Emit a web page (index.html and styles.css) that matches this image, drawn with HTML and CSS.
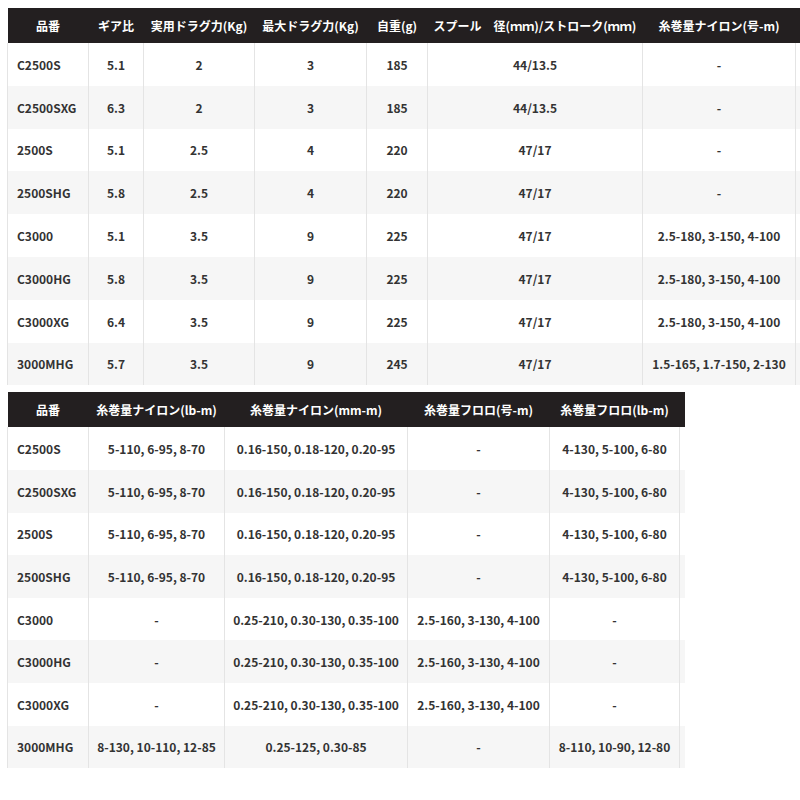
FILE: index.html
```html
<!DOCTYPE html>
<html lang="ja">
<head>
<meta charset="utf-8">
<link rel="stylesheet" href="styles.css">
</head>
<body>
<div class="wrap">
<table class="spec spec-a">
<colgroup>
<col style="width:81px"><col style="width:55px"><col style="width:111px"><col style="width:112px"><col style="width:61px"><col style="width:215px"><col style="width:153px"><col style="width:40px">
</colgroup>
<thead>
<tr><th>品番</th><th>ギア比</th><th>実用ドラグ力(Kg)</th><th>最大ドラグ力(Kg)</th><th>自重(g)</th><th>スプール　径(ｍｍ)/ストローク(ｍｍ)</th><th>糸巻量ナイロン(号-m)</th><th class="pad"></th></tr>
</thead>
<tbody>
<tr><td>C2500S</td><td>5.1</td><td>2</td><td>3</td><td>185</td><td>44/13.5</td><td>-</td><td class="pad"></td></tr>
<tr><td>C2500SXG</td><td>6.3</td><td>2</td><td>3</td><td>185</td><td>44/13.5</td><td>-</td><td class="pad"></td></tr>
<tr><td>2500S</td><td>5.1</td><td>2.5</td><td>4</td><td>220</td><td>47/17</td><td>-</td><td class="pad"></td></tr>
<tr><td>2500SHG</td><td>5.8</td><td>2.5</td><td>4</td><td>220</td><td>47/17</td><td>-</td><td class="pad"></td></tr>
<tr><td>C3000</td><td>5.1</td><td>3.5</td><td>9</td><td>225</td><td>47/17</td><td>2.5-180, 3-150, 4-100</td><td class="pad"></td></tr>
<tr><td>C3000HG</td><td>5.8</td><td>3.5</td><td>9</td><td>225</td><td>47/17</td><td>2.5-180, 3-150, 4-100</td><td class="pad"></td></tr>
<tr><td>C3000XG</td><td>6.4</td><td>3.5</td><td>9</td><td>225</td><td>47/17</td><td>2.5-180, 3-150, 4-100</td><td class="pad"></td></tr>
<tr><td>3000MHG</td><td>5.7</td><td>3.5</td><td>9</td><td>245</td><td>47/17</td><td>1.5-165, 1.7-150, 2-130</td><td class="pad"></td></tr>
</tbody>
</table>
</div>
<div class="wrap">
<table class="spec spec-b">
<colgroup>
<col style="width:81px"><col style="width:136px"><col style="width:183px"><col style="width:142px"><col style="width:130px"><col style="width:5px">
</colgroup>
<thead>
<tr><th>品番</th><th>糸巻量ナイロン(lb-m)</th><th>糸巻量ナイロン(mm-m)</th><th>糸巻量フロロ(号-m)</th><th>糸巻量フロロ(lb-m)</th><th class="pad"></th></tr>
</thead>
<tbody>
<tr><td>C2500S</td><td>5-110, 6-95, 8-70</td><td>0.16-150, 0.18-120, 0.20-95</td><td>-</td><td>4-130, 5-100, 6-80</td><td class="pad"></td></tr>
<tr><td>C2500SXG</td><td>5-110, 6-95, 8-70</td><td>0.16-150, 0.18-120, 0.20-95</td><td>-</td><td>4-130, 5-100, 6-80</td><td class="pad"></td></tr>
<tr><td>2500S</td><td>5-110, 6-95, 8-70</td><td>0.16-150, 0.18-120, 0.20-95</td><td>-</td><td>4-130, 5-100, 6-80</td><td class="pad"></td></tr>
<tr><td>2500SHG</td><td>5-110, 6-95, 8-70</td><td>0.16-150, 0.18-120, 0.20-95</td><td>-</td><td>4-130, 5-100, 6-80</td><td class="pad"></td></tr>
<tr><td>C3000</td><td>-</td><td>0.25-210, 0.30-130, 0.35-100</td><td>2.5-160, 3-130, 4-100</td><td>-</td><td class="pad"></td></tr>
<tr><td>C3000HG</td><td>-</td><td>0.25-210, 0.30-130, 0.35-100</td><td>2.5-160, 3-130, 4-100</td><td>-</td><td class="pad"></td></tr>
<tr><td>C3000XG</td><td>-</td><td>0.25-210, 0.30-130, 0.35-100</td><td>2.5-160, 3-130, 4-100</td><td>-</td><td class="pad"></td></tr>
<tr><td>3000MHG</td><td>8-130, 10-110, 12-85</td><td>0.25-125, 0.30-85</td><td>-</td><td>8-110, 10-90, 12-80</td><td class="pad"></td></tr>
</tbody>
</table>
</div>
</body>
</html>
```
FILE: styles.css
```css
html, body {
  margin: 0;
  padding: 0;
  background: #ffffff;
  overflow: hidden;
}
body {
  padding: 8px 0 0 7px;
  font-family: "Noto Sans CJK JP", "Noto Sans", sans-serif;
  color: #333333;
}
.wrap {
  overflow: hidden;
  margin-bottom: 7px;
}
.spec {
  border-collapse: collapse;
  table-layout: fixed;
  font-size: 12px;
  font-weight: 700;
}
.spec-a { width: 828px; }
.spec-b { width: 677px; }
.spec th {
  background: #231f20;
  color: #ffffff;
  height: 35px;
  padding: 0;
  text-align: center;
  font-weight: 700;
  white-space: nowrap;
}
.spec td {
  height: 42.8px;
  padding: 0;
  text-align: center;
  white-space: nowrap;
  border-left: 1px solid #e4e4e4;
  border-right: 1px solid #e4e4e4;
}
.spec-b td {
  height: 42.6px;
}
.spec td:first-child {
  text-align: left;
  padding-left: 9px;
}
.spec tbody tr:nth-child(even) td {
  background: #f6f6f6;
}
.spec td.pad {
  border: none;
  border-left: 1px solid #e4e4e4;
}
```
